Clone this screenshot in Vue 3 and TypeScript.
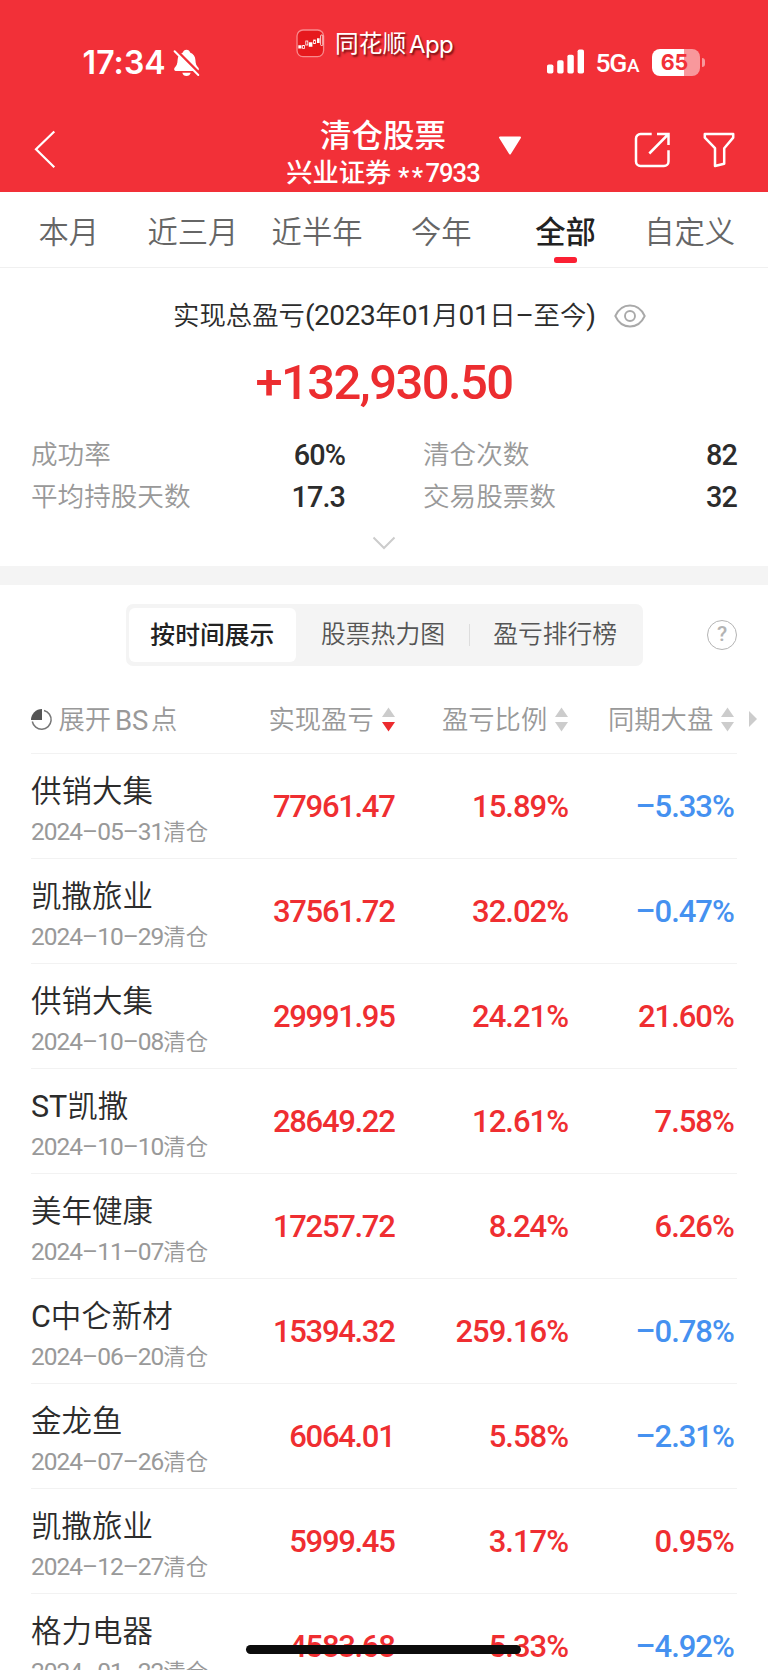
<script setup lang="ts">
interface Tab { label: string; active?: boolean }
interface Row { prefix?: string; name: string; date: string; profit: string; ratio: string; market: string }

const tabs: Tab[] = [
  { label: '本月' },
  { label: '近三月' },
  { label: '近半年' },
  { label: '今年' },
  { label: '全部', active: true },
  { label: '自定义' },
]

const columns = [
  { key: 'profit', label: '实现盈亏', sorted: true },
  { key: 'ratio', label: '盈亏比例', sorted: false },
  { key: 'market', label: '同期大盘', sorted: false },
]

const rows: Row[] = [
  { name: '供销大集', date: '2024–05–31', profit: '77961.47', ratio: '15.89%', market: '–5.33%' },
  { name: '凯撒旅业', date: '2024–10–29', profit: '37561.72', ratio: '32.02%', market: '–0.47%' },
  { name: '供销大集', date: '2024–10–08', profit: '29991.95', ratio: '24.21%', market: '21.60%' },
  { prefix: 'ST', name: '凯撒', date: '2024–10–10', profit: '28649.22', ratio: '12.61%', market: '7.58%' },
  { name: '美年健康', date: '2024–11–07', profit: '17257.72', ratio: '8.24%', market: '6.26%' },
  { prefix: 'C', name: '中仑新材', date: '2024–06–20', profit: '15394.32', ratio: '259.16%', market: '–0.78%' },
  { name: '金龙鱼', date: '2024–07–26', profit: '6064.01', ratio: '5.58%', market: '–2.31%' },
  { name: '凯撒旅业', date: '2024–12–27', profit: '5999.45', ratio: '3.17%', market: '0.95%' },
  { name: '格力电器', date: '2024–01–22', profit: '4583.68', ratio: '5.33%', market: '–4.92%' },
]

const tone = (value: string) => (value.startsWith('–') ? 'down' : 'up')
</script>

<template>
  <div class="screen">
    <header class="header">
      <div class="status">
        <div class="clock">17:34</div>
        <svg class="bell" width="27" height="29" viewBox="0 0 27 29">
          <path d="M13.5 .8c-1.9 0-3.3 1.2-3.6 2.8C6.500 4.800 4.700 7.600 4.600 11c-.1 4-1.100 5.800-3 7.700-.8.9-.6 3.200 1 3.200h21.800c1.600 0 1.800-2.300 1-3.200-1.900-1.900-2.900-3.700-3-7.700-.1-3.400-1.900-6.200-5.300-7.400C16.800 2 15.400.8 13.500.8z" fill="#fff" />
          <path d="M9.300 23.800h8.400c-.5 2-2 3.300-4.200 3.300s-3.700-1.300-4.200-3.300z" fill="#fff" />
          <path d="M2.700.8 26.900 25" stroke="#f23038" stroke-width="3" />
          <path d="M1.600 2.300 25.300 26" stroke="#fff" stroke-width="2" stroke-linecap="round" />
        </svg>
        <div class="source">
          <svg width="29" height="29" viewBox="0 0 29 29">
            <rect x="1" y="1" width="26.600" height="26.600" rx="6" fill="#e6191d" stroke="#f8898c" stroke-width="1.300" />
            <g fill="#fff">
              <path d="M2.300 16.200h3.200v3.200H2.300zM12.800 13.200h3.600v4.600h-3.600zM21 9.200h2.600v4.800H21z" />
            </g>
            <g fill="none" stroke="#fff" stroke-width=".8">
              <rect x="6.600" y="16.400" width="1.800" height="3" />
              <rect x="9.800" y="12" width="2" height="4" />
              <rect x="17.600" y="11" width="1.900" height="3.600" />
              <rect x="24.600" y="6" width="2.200" height="10.500" rx=".8" />
            </g>
          </svg>
          <span class="source-name">同花顺</span><span class="source-app">App</span>
        </div>
        <svg class="signal" width="38" height="25" viewBox="0 0 38 25" fill="#fff">
          <rect x="0" y="15.500" width="6.400" height="9" rx="1.800" />
          <rect x="10.200" y="11.200" width="6.400" height="13.300" rx="1.800" />
          <rect x="20.400" y="5.700" width="6.400" height="18.800" rx="1.800" />
          <rect x="30.600" y=".5" width="6.400" height="24" rx="1.800" />
        </svg>
        <div class="network">5G<small>A</small></div>
        <div class="battery"><span>65</span></div>
        <i class="nub"></i>
      </div>

      <div class="nav">
        <svg class="back" width="24" height="40" viewBox="0 0 24 40"><path d="M21.300 2.500 3 20.300l18.300 17.900" fill="none" stroke="#fff" stroke-width="2.200" /></svg>
        <div class="titles">
          <div class="title">清仓股票</div>
          <div class="account">兴业证券 <b class="stars">**</b><b>7933</b></div>
        </div>
        <svg class="caret" width="26" height="22" viewBox="0 0 26 22"><path d="M3 2.500h20L13 18.500z" fill="#fff" stroke="#fff" stroke-width="2" stroke-linejoin="round" /></svg>
        <svg class="share" width="36" height="36" viewBox="0 0 36 36" fill="none" stroke="#fff" stroke-width="2.500">
          <path d="M17.700 2H6.500A4.500 4.500 0 0 0 2 6.500v23A4.500 4.500 0 0 0 6.500 34H30a4.500 4.500 0 0 0 4.500-4.500V18.300" />
          <path d="M23 2h11.500v11M34.500 2 15.300 21.500" />
        </svg>
        <svg class="filter" width="32" height="36" viewBox="0 0 32 36" fill="none" stroke="#fff" stroke-width="2.500" stroke-linejoin="round">
          <path d="M1.800 2h28.400v3.600l-9 10.600v15.600l-9.200 2.200V16.200L1.800 5.600z" />
        </svg>
      </div>
    </header>

    <nav class="tabs">
      <div v-for="tab in tabs" :key="tab.label" class="tab" :class="{ active: tab.active }">{{ tab.label }}</div>
    </nav>

    <section class="summary">
      <div class="caption">
        <span class="caption-text">实现总盈亏<i>(2023</i>年<i>01</i>月<i>01</i>日<i>–</i>至今<i>)</i></span>
        <svg width="32" height="24" viewBox="0 0 32 24" fill="none" stroke="#a9a9a9" stroke-width="1.900">
          <path d="M1.300 12C4.500 5 9.700 1.500 16 1.500S27.500 5 30.700 12C27.500 19 22.300 22.500 16 22.500S4.500 19 1.300 12z" />
          <circle cx="16" cy="12" r="5" />
        </svg>
      </div>
      <div class="total">+132,930.50</div>
      <div class="stats">
        <span>成功率</span><b>60%</b><span class="second">清仓次数</span><b>82</b>
        <span>平均持股天数</span><b>17.3</b><span class="second">交易股票数</span><b>32</b>
      </div>
      <svg class="expand" width="24" height="15" viewBox="0 0 24 15"><path d="M1.500 1.500 12 12 22.500 1.500" fill="none" stroke="#ccc" stroke-width="2" /></svg>
    </section>

    <div class="views">
      <div class="segments">
        <div class="segment on">按时间展示</div>
        <div class="segment">股票热力图</div>
        <i class="divider"></i>
        <div class="segment last">盈亏排行榜</div>
      </div>
      <div class="help">?</div>
    </div>

    <section class="table">
      <div class="head">
        <div class="toggle">
          <svg width="22" height="22" viewBox="0 0 22 22">
            <path d="M13 1.500A9.500 9.500 0 1 1 1.300 12.500" fill="none" stroke="#777" stroke-width="1.500" />
            <path d="M11 0v11H0A11 11 0 0 1 11 0z" fill="#555" />
          </svg>
          <span>展开</span><span class="latin">BS</span><span>点</span>
        </div>
        <div v-for="col in columns" :key="col.key" class="col" :class="col.key">
          <span>{{ col.label }}</span>
          <svg width="13" height="25" viewBox="0 0 13 25">
            <path d="M6.500 .5 13 10H0z" fill="#ccc" />
            <path d="M0 15h13L6.500 24.500z" :fill="col.sorted ? '#ec2b2e' : '#ccc'" />
          </svg>
        </div>
        <svg class="more" width="8" height="16" viewBox="0 0 8 16"><path d="M0 0v16l8-8z" fill="#ccc" /></svg>
      </div>
      <div v-for="(row, i) in rows" :key="i" class="row">
        <div class="stock">
          <div class="name"><i v-if="row.prefix">{{ row.prefix }}</i>{{ row.name }}</div>
          <div class="date">{{ row.date }}<span>清仓</span></div>
        </div>
        <div class="num profit" :class="tone(row.profit)">{{ row.profit }}</div>
        <div class="num ratio" :class="tone(row.ratio)">{{ row.ratio }}</div>
        <div class="num market" :class="tone(row.market)">{{ row.market }}</div>
      </div>
    </section>
    <div class="home"></div>
  </div>
</template>

<style>
body { margin: 0; background: #fff; }
</style>

<style scoped>
.screen {
  position: relative;
  width: 768px;
  height: 1670px;
  overflow: hidden;
  background: #fff;
  color: #2c2c2c;
  font-family: Roboto, "Noto Sans CJK SC", sans-serif;
}
svg { display: block; flex: none; }
b, i { font-style: normal; }

.header { height: 192px; background: #f23038; color: #fff; }
.status { display: flex; align-items: flex-start; height: 112px; box-sizing: border-box; padding: 29px 0 0 82.500px; }
.clock { width: 90.500px; margin-top: 14px; font: 600 32px/40px Inter, sans-serif; letter-spacing: 0.100px; white-space: nowrap; }
.bell { margin-top: 20px; }
.source { display: flex; align-items: center; width: 251px; margin-left: 96px; height: 29px; font-size: 23.700px; text-shadow: 1.500px 1.500px 2px rgba(60, 0, 0, .7); }
.source-name { margin-left: 10px; line-height: 29px; padding-top: 1px; }
.source-app { margin-left: 3px; font: 400 24px/29px Inter, sans-serif; letter-spacing: -0.700px; padding-top: 1px; }
.signal { margin-top: 20px; }
.network { width: 56px; margin: 19px 0 0 10.500px; font: 500 26.500px/30px Roboto, sans-serif; letter-spacing: -1.300px; white-space: nowrap; }
.network small { font-size: 19px; margin-left: 1px; }
.battery { width: 48px; height: 27px; margin-top: 20px; border-radius: 8px; background: linear-gradient(90deg, #fff 66%, #f8989c 66%); color: #f23038; text-align: center; font: 700 21.500px/27px Inter, sans-serif; }
.battery span { display: block; margin-left: -2px; }
.nub { width: 3px; height: 9px; margin: 29px 0 0 2px; border-radius: 0 5px 5px 0; background: #f8989c; }

.nav { display: flex; align-items: flex-start; height: 80px; padding-left: 33px; }
.back { margin-top: 17px; }
.titles { width: 330px; margin-left: 161px; text-align: center; margin-top: 2px; }
.title { height: 46px; line-height: 46px; font-size: 31.500px; font-weight: 500; }
.account { line-height: 27px; height: 27px; font-size: 26.300px; font-weight: 500; white-space: nowrap; }
.account b { font-size: 25.500px; font-weight: 500; letter-spacing: -0.900px; }
.account .stars { letter-spacing: 2.400px; line-height: 0; vertical-align: -4px; }
.caret { margin: 23px 0 0 -51px; }
.share { margin: 20px 0 0 111px; }
.filter { margin: 20px 0 0 33px; }

.tabs { display: grid; grid-template-columns: repeat(6, 124.200px); height: 75px; padding-left: 6.600px; border-bottom: 1px solid #f0f0f0; }
.tab { display: flex; flex-direction: column; align-items: center; line-height: 81px; height: 75px; font-size: 30.300px; font-weight: 350; color: #666; }
.tab.active { color: #222; font-weight: 500; }
.tab.active::after { content: ""; flex: none; width: 23px; height: 6px; margin-top: -16.500px; border-radius: 2.500px; background: #fb2033; }

.summary { height: 298px; border-bottom: 19px solid #f4f4f4; }
.caption { display: flex; align-items: center; height: 32px; padding: 32px 0 0 173px; }
.caption-text { width: 441px; line-height: 32px; font-size: 26.400px; font-weight: 350; white-space: nowrap; }
.caption-text i { font-size: 28px; font-weight: 400; letter-spacing: -0.450px; }
.total { margin-top: 22px; height: 58px; line-height: 58px; text-align: center; font-size: 49px; font-weight: 500; letter-spacing: -1.600px; color: #ec2d30; }
.stats { display: grid; grid-template-columns: 215px 99px 292px 1fr; padding: 22px 31px 0 31px; line-height: 42px; font-size: 26.600px; font-weight: 350; color: #999; }
.stats b { text-align: right; font-size: 28.800px; font-weight: 500; color: #2c2c2c; letter-spacing: -0.900px; }
.second { padding-left: 78px; }
.expand { margin: 18px auto 0; }

.views { display: flex; align-items: center; height: 99px; padding-left: 126px; }
.segments { display: flex; align-items: center; box-sizing: border-box; width: 517px; height: 62px; padding: 4px 3px; border-radius: 7px; background: #f4f4f4; font-size: 24.800px; color: #555; font-weight: 350; }
.segment { width: 174px; line-height: 56px; text-align: center; text-indent: 1px; }
.segment.on { width: 167px; height: 54px; border-radius: 6px; background: #fff; color: #222; font-weight: 500; text-indent: 0; }
.segment.last { width: 170px; text-indent: 0; }
.divider { width: 1px; height: 22px; background: #ddd; }
.help { box-sizing: border-box; width: 30px; height: 30px; margin-left: 64px; border: 1.800px solid #b4b4b4; border-radius: 50%; text-align: center; font: 500 21px/27px Roboto, sans-serif; color: #b4b4b4; }

.table { padding: 0 31px; }
.head { position: relative; display: grid; grid-template-columns: 237.500px 173.500px 166px 124px; height: 69px; border-bottom: 1px solid #f2f2f2; color: #999; font-size: 26.300px; font-weight: 350; line-height: 71px; white-space: nowrap; }
.toggle, .col { display: flex; align-items: center; height: 71px; }
.toggle span, .col span { padding-top: 2px; }
.toggle svg { margin-right: 5.500px; }
.toggle .latin { margin: 0 3px 0 4px; font-size: 27.500px; font-weight: 400; letter-spacing: -0.300px; }
.col svg { margin-left: 8px; }
.more { position: absolute; left: 718px; top: 27px; }
.row { display: grid; grid-template-columns: 214.500px 149px 173.500px 1fr; height: 104px; padding-right: 3.200px; border-bottom: 1px solid #f2f2f2; }
.name { margin-top: 17.500px; line-height: 40px; font-size: 30.500px; font-weight: 350; }
.name i { font-weight: 400; }
.date { margin-top: 5px; line-height: 30px; font-size: 24.500px; letter-spacing: -1px; color: #999; white-space: nowrap; }
.date span { font-size: 22.400px; font-weight: 350; letter-spacing: 0; }
.num { line-height: 106px; font-size: 31px; font-weight: 500; letter-spacing: -1px; text-align: right; }
.num.profit { letter-spacing: -1.300px; }
.up { color: #ef2e31; }
.down { color: #4591f0; }
.home { position: absolute; left: 246px; top: 1645px; width: 275px; height: 9px; border-radius: 5px; background: #0c0c0c; }
</style>
